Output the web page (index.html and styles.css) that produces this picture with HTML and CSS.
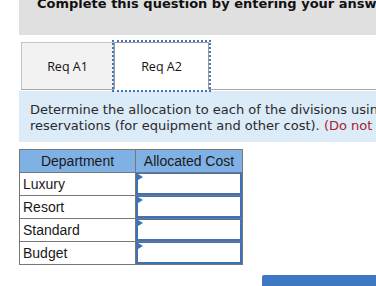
FILE: index.html
```html
<!DOCTYPE html>
<html>
<head>
<meta charset="utf-8">
<link rel="stylesheet" href="styles.css">
</head>
<body>
<div class="page">
  <div class="banner"><div class="banner-text">Complete this question by entering your answers in the tabs below.</div></div>
  <div class="tabs">
    <div class="tab">Req A1</div>
    <div class="tab active">Req A2</div>
  </div>
  <div class="info">
    Determine the allocation to each of the divisions using the number of<br>
    reservations (for equipment and other cost). <span class="note">(Do not round intermediate calculations.)</span>
  </div>
  <table class="grid">
    <thead>
      <tr><th class="c1">Department</th><th class="c2">Allocated Cost</th></tr>
    </thead>
    <tbody>
      <tr><td class="c1">Luxury</td><td class="cell"><div class="input"></div></td></tr>
      <tr><td class="c1">Resort</td><td class="cell"><div class="input"></div></td></tr>
      <tr><td class="c1">Standard</td><td class="cell"><div class="input"></div></td></tr>
      <tr><td class="c1">Budget</td><td class="cell"><div class="input"></div></td></tr>
    </tbody>
  </table>
  <div class="footer"><div class="btn"></div></div>
</div>
</body>
</html>
```

FILE: styles.css
```css
html, body {
  margin: 0;
  padding: 0;
  overflow: hidden;
  background: #ffffff;
}
.page {
  width: 900px;
  padding-left: 19px;
  font-family: "DejaVu Sans", Verdana, sans-serif;
}
.banner {
  height: 35px;
  background: #e0e0e0;
  overflow: hidden;
}
.banner-text {
  margin-top: -4px;
  padding-left: 18px;
  font-weight: bold;
  font-size: 13px;
  line-height: 16px;
  color: #111;
  white-space: nowrap;
}
.tabs {
  display: flex;
  align-items: flex-end;
  margin-top: 6px;
  margin-left: 2px;
  border-bottom: 1px solid #a8a8a8;
  height: 48px;
}
.tab {
  box-sizing: border-box;
  width: 93px;
  height: 47px;
  display: flex;
  align-items: center;
  justify-content: center;
  font-family: "Open Sans", "Noto Sans", sans-serif;
  font-size: 12.5px;
  color: #111;
  background: #f2f2f2;
  border: 1px solid #c4c4c4;
  border-bottom: none;
}
.tab.active {
  width: 95px;
  height: 48px;
  margin-bottom: -1px;
  background: #ffffff;
  border: 1px solid #9a9a9a;
  border-bottom: 1px solid #ffffff;
  outline: 2px dotted #3f76bd;
  outline-offset: 0;
}
.info {
  margin-top: 1px;
  background: #dbebf8;
  height: 51px;
  box-sizing: border-box;
  padding: 11px 0 0 11px;
  font-size: 13px;
  line-height: 16px;
  color: #2a2a2a;
  white-space: nowrap;
}
.note {
  color: #a8202c;
}
.grid {
  margin-top: 7px;
  border-collapse: collapse;
  font-family: "Liberation Sans", Arial, sans-serif;
  font-size: 14px;
  color: #1a1a1a;
}
.grid th {
  background: #7fb1e4;
  font-weight: normal;
  height: 22px;
  padding: 0;
  border: 1px solid #777;
  text-align: center;
}
.grid td {
  height: 22px;
  padding: 0;
  border: 1px solid #777;
}
.c1 {
  width: 115px;
}
.grid td.c1 {
  padding-left: 3px;
  box-sizing: border-box;
}
.c2 {
  width: 106px;
}
.cell {
  position: relative;
}
.input {
  box-sizing: border-box;
  height: 22px;
  border: 2px solid #3d72b8;
  border-top-width: 1px;
  background: #fff;
  position: relative;
}
.input::before {
  content: "";
  position: absolute;
  left: 0;
  top: 0;
  border-top: 3px solid transparent;
  border-bottom: 3px solid transparent;
  border-left: 5px solid #3d72b8;
}
.footer {
  display: flex;
  padding-left: 243px;
  margin-top: 10px;
}
.btn {
  width: 120px;
  height: 14px;
  background: #3c78c3;
  border-radius: 2px 2px 0 0;
}
```
